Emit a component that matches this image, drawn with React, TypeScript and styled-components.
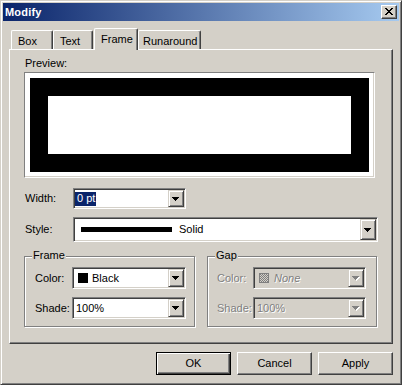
import React from 'react';
import styled, { createGlobalStyle, css } from 'styled-components';

const Global = createGlobalStyle`
  html, body { margin: 0; padding: 0; background: #d4d0c8; }
  body { font-family: "Liberation Sans", Arial, sans-serif; font-size: 11px; }
`;

const FACE = '#d4d0c8';
const SHADOW = '#808080';
const DARK = '#404040';

const Window = styled.div`
  box-sizing: border-box;
  width: 402px;
  height: 385px;
  background: ${FACE};
  border: 1px solid;
  border-color: ${FACE} ${DARK} ${DARK} ${FACE};
  box-shadow: inset 1px 1px 0 #fff, inset -1px -1px 0 ${SHADOW};
  padding: 2px;
  display: flex;
  flex-direction: column;
  font-family: "Liberation Sans", Arial, sans-serif;
  font-size: 11px;
  line-height: 13px;
  color: #000;
`;

const TitleBar = styled.div`
  height: 18px;
  flex: none;
  display: flex;
  align-items: center;
  justify-content: space-between;
  padding: 0 2px 0 2px;
  background: linear-gradient(to right, #0a246a, #a6caf0);
`;

const TitleText = styled.span`
  color: #fff;
  font-weight: bold;
  font-size: 11px;
  letter-spacing: 0.2px;
`;

const CloseButton = styled.div`
  box-sizing: border-box;
  width: 16px;
  height: 14px;
  background: ${FACE};
  border: 1px solid;
  border-color: #fff ${DARK} ${DARK} #fff;
  box-shadow: inset -1px -1px 0 ${SHADOW};
  display: flex;
  align-items: center;
  justify-content: center;
  padding: 0 1px 1px 0;
`;

const Body = styled.div`
  flex: 1;
  display: flex;
  flex-direction: column;
  padding: 0 6px;
`;

const TabStrip = styled.div`
  display: flex;
  align-items: flex-end;
  height: 21px;
  margin-top: 7px;
  padding-left: 2px;
  position: relative;
  z-index: 1;
`;

const Tab = styled.div<{ $w: number; $active?: boolean; $pl?: number; $ml?: number }>`
  box-sizing: border-box;
  width: ${(p) => p.$w}px;
  height: 19px;
  margin-left: ${(p) => p.$ml ?? 0}px;
  padding: 4px 0 0 ${(p) => p.$pl ?? 6}px;
  background: ${FACE};
  border-top: 1px solid #fff;
  border-left: 1px solid #fff;
  border-right: 1px solid ${DARK};
  border-radius: 2px 2px 0 0;
  box-shadow: inset -1px 0 0 ${SHADOW};
  white-space: nowrap;
  ${(p) =>
    p.$active &&
    css`
      height: 22px;
      margin-bottom: -1px;
    `}
`;

const Panel = styled.div`
  box-sizing: border-box;
  height: 295px;
  flex: none;
  border: 1px solid;
  border-color: #fff ${DARK} ${DARK} #fff;
  box-shadow: inset -1px -1px 0 ${SHADOW};
  padding: 7px 14px 0 14px;
  display: flex;
  flex-direction: column;
`;

const Caption = styled.div`
  margin-bottom: 2px;
  padding-left: 1px;
`;

const PreviewWell = styled.div`
  box-sizing: border-box;
  width: 351px;
  height: 106px;
  background: #fff;
  border: 1px solid;
  border-color: ${SHADOW} #fff #fff ${SHADOW};
  box-shadow: inset -1px -1px 0 ${FACE};
  padding: 5px;
`;

const FrameSample = styled.div`
  box-sizing: border-box;
  height: 100%;
  background: #000;
  padding: 18px;
`;

const FrameInner = styled.div`
  height: 100%;
  background: #fff;
`;

const FieldRow = styled.div<{ $mt?: number }>`
  display: flex;
  align-items: center;
  margin-top: ${(p) => p.$mt ?? 0}px;
`;

const disabledText = css`
  color: ${SHADOW};
  text-shadow: 1px 1px 0 #fff;
`;

const FieldLabel = styled.span<{ $w: number; $disabled?: boolean }>`
  box-sizing: border-box;
  width: ${(p) => p.$w}px;
  flex: none;
  padding-left: 1px;
  white-space: nowrap;
  ${(p) => p.$disabled && disabledText}
`;

const Combo = styled.div<{ $w: number; $h: number; $disabled?: boolean }>`
  box-sizing: border-box;
  width: ${(p) => p.$w}px;
  height: ${(p) => p.$h}px;
  flex: none;
  border: 1px solid;
  border-color: ${SHADOW} #fff #fff ${SHADOW};
  box-shadow: inset 1px 1px 0 ${DARK}, inset -1px -1px 0 ${FACE};
  background: ${(p) => (p.$disabled ? FACE : '#fff')};
  padding: 1px;
  display: flex;
  align-items: stretch;
`;

const ComboValue = styled.div<{ $pl?: number; $disabled?: boolean }>`
  flex: 1;
  display: flex;
  align-items: center;
  padding-left: ${(p) => p.$pl ?? 2}px;
  white-space: nowrap;
  overflow: hidden;
  ${(p) => p.$disabled && disabledText}
`;

const Highlight = styled.span`
  background: #0a246a;
  color: #fff;
  padding: 0 1px 1px 2px;
  margin-left: -2px;
`;

const DropButton = styled.div`
  box-sizing: border-box;
  width: 16px;
  flex: none;
  background: ${FACE};
  border: 1px solid;
  border-color: ${FACE} ${DARK} ${DARK} ${FACE};
  box-shadow: inset 1px 1px 0 #fff, inset -1px -1px 0 ${SHADOW};
  display: flex;
  align-items: center;
  justify-content: center;
  padding-top: 1px;
`;

const Swatch = styled.span`
  width: 10px;
  height: 10px;
  background: #000;
  margin-right: 4px;
  flex: none;
`;

const LineSample = styled.span`
  width: 91px;
  height: 5px;
  background: #000;
  margin-right: 7px;
  flex: none;
`;

const Italic = styled.span`
  font-style: italic;
  margin-left: 5px;
`;

const GroupRow = styled.div`
  display: flex;
  gap: 12px;
  margin-top: 14px;
`;

const Group = styled.div<{ $w: number; $pl: number }>`
  position: relative;
  box-sizing: border-box;
  width: ${(p) => p.$w}px;
  height: 71px;
  border: 1px solid ${SHADOW};
  box-shadow: inset 1px 1px 0 #fff, 1px 1px 0 #fff;
  padding: 10px 0 0 ${(p) => p.$pl}px;
  display: flex;
  flex-direction: column;
  gap: 8px;
`;

const GroupTitle = styled.span`
  position: absolute;
  top: -8px;
  left: 7px;
  padding: 0 1px;
  background: ${FACE};
`;

const ButtonRow = styled.div`
  display: flex;
  justify-content: flex-end;
  gap: 6px;
  margin-top: 8px;
`;

const Button = styled.div<{ $default?: boolean }>`
  box-sizing: border-box;
  width: 75px;
  height: 23px;
  background: ${FACE};
  display: flex;
  align-items: center;
  justify-content: center;
  border: 1px solid;
  border-color: #fff ${DARK} ${DARK} #fff;
  box-shadow: inset -1px -1px 0 ${SHADOW};
  padding-bottom: 1px;
  ${(p) =>
    p.$default &&
    css`
      border-color: #000;
      box-shadow: inset 1px 1px 0 #fff, inset -1px -1px 0 ${DARK}, inset -2px -2px 0 ${SHADOW};
    `}
`;

const CloseGlyph = () => (
  <svg width="8" height="7" viewBox="0 0 8 7" shapeRendering="crispEdges">
    <path
      fill="#000"
      d="M0 0h2v1H0zM6 0h2v1H6zM1 1h2v1H1zM5 1h2v1H5zM2 2h4v1H2zM3 3h2v1H3zM2 4h4v1H2zM1 5h2v1H1zM5 5h2v1H5zM0 6h2v1H0zM6 6h2v1H6z"
    />
  </svg>
);

const Arrow = ({ disabled }: { disabled?: boolean }) => (
  <svg width="8" height="5" viewBox="0 0 8 5" shapeRendering="crispEdges">
    {disabled && <path fill="#fff" d="M1 1h7v1H1zM2 2h5v1H2zM3 3h3v1H3zM4 4h1v1H4z" />}
    <path
      fill={disabled ? SHADOW : '#000'}
      d="M0 0h7v1H0zM1 1h5v1H1zM2 2h3v1H2zM3 3h1v1H3z"
    />
  </svg>
);

const NoneSwatch = () => (
  <svg width="10" height="10" viewBox="0 0 10 10" shapeRendering="crispEdges">
    <defs>
      <pattern id="chk" width="2" height="2" patternUnits="userSpaceOnUse">
        <rect width="2" height="2" fill="#d4d0c8" />
        <rect width="1" height="1" fill="#808080" />
        <rect x="1" y="1" width="1" height="1" fill="#808080" />
      </pattern>
    </defs>
    <rect x="0" y="0" width="10" height="10" fill="#808080" />
    <rect x="1" y="1" width="8" height="8" fill="url(#chk)" />
  </svg>
);

type ComboProps = {
  w: number;
  h: number;
  disabled?: boolean;
  pl?: number;
  children: React.ReactNode;
};

const ComboBox = ({ w, h, disabled, pl, children }: ComboProps) => (
  <Combo $w={w} $h={h} $disabled={disabled}>
    <ComboValue $pl={pl} $disabled={disabled}>
      {children}
    </ComboValue>
    <DropButton>
      <Arrow disabled={disabled} />
    </DropButton>
  </Combo>
);

export default function App() {
  return (
    <>
      <Global />
      <Window>
        <TitleBar>
          <TitleText>Modify</TitleText>
          <CloseButton>
            <CloseGlyph />
          </CloseButton>
        </TitleBar>
        <Body>
          <TabStrip>
            <Tab $w={42}>Box</Tab>
            <Tab $w={40}>Text</Tab>
            <Tab $w={44} $active $ml={1}>
              Frame
            </Tab>
            <Tab $w={63} $pl={4}>
              Runaround
            </Tab>
          </TabStrip>
          <Panel>
            <Caption>Preview:</Caption>
            <PreviewWell>
              <FrameSample>
                <FrameInner />
              </FrameSample>
            </PreviewWell>

            <FieldRow $mt={10}>
              <FieldLabel $w={49}>Width:</FieldLabel>
              <ComboBox w={113} h={21}>
                <Highlight>0 pt</Highlight>
              </ComboBox>
            </FieldRow>

            <FieldRow $mt={8}>
              <FieldLabel $w={49}>Style:</FieldLabel>
              <ComboBox w={305} h={25} pl={6}>
                <LineSample />
                Solid
              </ComboBox>
            </FieldRow>

            <GroupRow>
              <Group $w={171} $pl={9}>
                <GroupTitle>Frame</GroupTitle>
                <FieldRow>
                  <FieldLabel $w={38}>Color:</FieldLabel>
                  <ComboBox w={114} h={22} pl={4}>
                    <Swatch />
                    Black
                  </ComboBox>
                </FieldRow>
                <FieldRow>
                  <FieldLabel $w={38}>Shade:</FieldLabel>
                  <ComboBox w={114} h={22}>
                    100%
                  </ComboBox>
                </FieldRow>
              </Group>
              <Group $w={170} $pl={8}>
                <GroupTitle>Gap</GroupTitle>
                <FieldRow>
                  <FieldLabel $w={37} $disabled>
                    Color:
                  </FieldLabel>
                  <ComboBox w={113} h={22} pl={4} disabled>
                    <NoneSwatch />
                    <Italic>None</Italic>
                  </ComboBox>
                </FieldRow>
                <FieldRow>
                  <FieldLabel $w={37} $disabled>
                    Shade:
                  </FieldLabel>
                  <ComboBox w={113} h={22} disabled>
                    100%
                  </ComboBox>
                </FieldRow>
              </Group>
            </GroupRow>
          </Panel>
          <ButtonRow>
            <Button $default>OK</Button>
            <Button>Cancel</Button>
            <Button>Apply</Button>
          </ButtonRow>
        </Body>
      </Window>
    </>
  );
}
